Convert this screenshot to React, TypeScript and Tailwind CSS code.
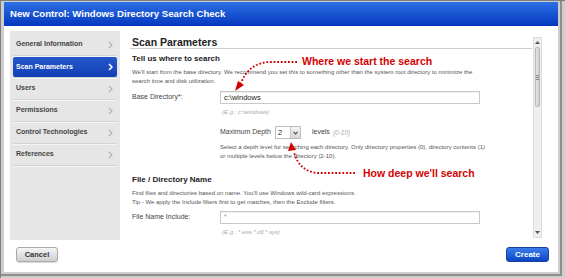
import React from "react";

const F = { fontFamily: '"Liberation Sans", Arial, sans-serif' };

function Chevron({ white }: { white?: boolean }) {
  return (
    <svg width="5" height="8" viewBox="0 0 5 8" className="shrink-0">
      <path d="M1 1 L4 4 L1 7" fill="none" stroke={white ? "#ffffff" : "#b0b0b0"} strokeWidth={white ? 1.5 : 1.1} />
    </svg>
  );
}

const items = [
  "General Information",
  "Scan Parameters",
  "Users",
  "Permissions",
  "Control Technologies",
  "References",
];

function Sidebar() {
  return (
    <div className="w-[110px] h-[209px] bg-[#e6e6e6] pt-[3px] px-[3px] flex flex-col">
      {items.map((t, i) =>
        i === 1 ? (
          <div key={t} className="h-[22px] py-[1px] border-b border-[#d3d3d3] shadow-[0_1px_0_#f5f5f5]">
            <div className="h-[20px] rounded-[2px] bg-linear-to-b from-[#2457cc] to-[#1240b4] flex items-center justify-between pl-[3px] pr-[4px]">
              <span className="text-[7px] font-bold text-white">{t}</span>
              <Chevron white />
            </div>
          </div>
        ) : (
          <div
            key={t}
            className="h-[22px] border-b border-[#d3d3d3] shadow-[0_1px_0_#f5f5f5] flex items-center justify-between pl-[3px] pr-[4px]"
          >
            <span className="text-[7px] font-bold text-[#444]">{t}</span>
            <Chevron />
          </div>
        )
      )}
    </div>
  );
}

function Scrollbar() {
  return (
    <div className="w-[9px] mt-[6px] mb-[2px] bg-[#efefef] border border-[#dcdcdc] flex flex-col">
      <div className="h-[9px] flex items-center justify-center">
        <svg width="5" height="3" viewBox="0 0 5 3">
          <path d="M0 3 L2.5 0 L5 3 Z" fill="#555" />
        </svg>
      </div>
      <div className="h-[60px] mx-[1px] rounded-[2px] bg-linear-to-r from-[#e4e4e4] to-[#cfcfcf] border border-[#b8b8b8] flex items-center justify-center">
        <div className="flex flex-col gap-[1px]">
          <div className="w-[3px] h-px bg-[#888]" />
          <div className="w-[3px] h-px bg-[#888]" />
          <div className="w-[3px] h-px bg-[#888]" />
        </div>
      </div>
      <div className="flex-1" />
      <div className="h-[9px] flex items-center justify-center">
        <svg width="5" height="3" viewBox="0 0 5 3">
          <path d="M0 0 L2.5 3 L5 0 Z" fill="#555" />
        </svg>
      </div>
    </div>
  );
}

function Content() {
  return (
    <div className="flex-1 flex ml-[10px] mr-[10px] h-[209px]">
      <div className="flex-1 overflow-hidden flex flex-col">
        <div className="pt-[5px] border-b border-[#cfcfcf] mr-[1px]">
          <div className="pl-[2px] text-[10.5px] leading-[12px] font-bold text-[#222]">Scan Parameters</div>
        </div>
        <div className="pl-[2px] flex flex-col">
          <div className="mt-[5px] text-[8px] leading-[10px] font-bold text-[#222]">Tell us where to search</div>
          <div className="mt-[4px] text-[6px] leading-[9px] text-[#555] whitespace-nowrap">
            We'll start from the base directory. We recommend you set this to something other than the system root directory to minimize the
            <br />
            search time and disk utilization.
          </div>
          <div className="mt-[5px] flex items-center h-[13px]">
            <div className="w-[88px] text-[7px] text-[#444]">Base Directory*:</div>
            <div className="w-[260px] h-[13px] border border-[#c9c9c9] shadow-[inset_0_1px_1px_#eee] flex items-center pl-[3px] text-[7.5px] text-[#222]">
              c:\windows
            </div>
          </div>
          <div className="mt-[4px] pl-[90px] text-[6px] leading-[9px] italic text-[#aaa]">(E.g.: c:\windows)</div>
          <div className="mt-[9px] pl-[88px] flex items-center h-[13px]">
            <span className="text-[7px] text-[#444]">Maximum Depth</span>
            <div className="ml-[4px] w-[26px] h-[13px] border border-[#bdbdbd] flex items-stretch">
              <div className="flex-1 flex items-center pl-[2px] text-[7.5px] text-[#222]">2</div>
              <div className="w-[10px] bg-linear-to-b from-[#f4f4f4] to-[#d8d8d8] border-l border-[#c6c6c6] flex items-center justify-center">
                <svg width="5" height="4" viewBox="0 0 5 4">
                  <path d="M0.5 0.8 L2.5 3 L4.5 0.8" fill="none" stroke="#444" strokeWidth="1.1" />
                </svg>
              </div>
            </div>
            <span className="ml-[11px] text-[7px] text-[#444]">levels</span>
            <span className="ml-[3px] text-[6.5px] italic text-[#aaa]">(0-10)</span>
          </div>
          <div className="mt-[4px] pl-[88px] text-[6px] leading-[9px] text-[#555] whitespace-nowrap">
            Select a depth level for searching each directory. Only directory properties (0), directory contents (1)
            <br />
            or multiple levels below the directory (2-10).
          </div>
          <div className="mt-[14px] text-[8px] leading-[10px] font-bold text-[#222]">File / Directory Name</div>
          <div className="mt-[4px] text-[6px] leading-[9px] text-[#555]">
            Find files and directories based on name. You'll use Windows wild-card expressions.
            <br />
            Tip - We apply the Include filters first to get matches, then the Exclude filters.
          </div>
          <div className="mt-[4px] flex items-center h-[13px] shrink-0">
            <div className="w-[88px] text-[7px] text-[#444]">File Name Include:</div>
            <div className="w-[260px] h-[13px] border border-[#c9c9c9] shadow-[inset_0_1px_1px_#eee] flex items-center pl-[3px] text-[7px] text-[#999]">
              *
            </div>
          </div>
          <div className="mt-[4px] pl-[90px] text-[6px] leading-[9px] italic text-[#aaa]">(E.g.: *.exe,*.dll,*.sys)</div>
        </div>
      </div>
      <Scrollbar />
    </div>
  );
}

function Annotations() {
  return (
    <>
      <svg className="absolute left-0 top-0 pointer-events-none" width="565" height="278" viewBox="0 0 565 278">
        <path d="M296 61 L268 61 Q248 62 240 82" fill="none" stroke="#d40000" strokeWidth="1.8" strokeDasharray="1.8 1.8" />
        <polygon points="234,90 237,80 243,84" fill="#d40000" />
        <path d="M354 172 L316 172 Q298 170 293 151" fill="none" stroke="#d40000" strokeWidth="1.8" strokeDasharray="1.8 1.8" />
        <polygon points="290,141 287,150 295,149" fill="#d40000" />
      </svg>
      <div className="absolute left-[301px] top-[54px] text-[10.5px] leading-[12px] font-bold text-[#d40000] whitespace-nowrap">
        Where we start the search
      </div>
      <div className="absolute left-[362px] top-[166px] text-[10.5px] leading-[12px] font-bold text-[#d40000] whitespace-nowrap">
        How deep we'll search
      </div>
    </>
  );
}

export default function App() {
  return (
    <div style={F} className="relative w-[565px] h-[278px] bg-[#cdcdcd] border-l border-t border-[#7d7d7d] pr-[3px] pb-[2px] flex">
      <div className="flex-1 flex border-r-2 border-b-2 border-[#8e8e8e] pl-[3px] pt-[1px] pr-[2px] pb-[2px]">
        <div className="flex-1 flex flex-col bg-white">
          <div className="h-[24px] bg-linear-to-b from-[#2e6fe4] to-[#0637bf] flex items-center pl-[6px]">
            <span className="text-[9.6px] font-bold text-white">New Control: Windows Directory Search Check</span>
          </div>
          <div className="flex-1 flex flex-col pt-[5px] px-[6px]">
            <div className="flex">
              <Sidebar />
              <Content />
            </div>
            <div className="flex-1 flex items-start justify-between pt-[7px] pl-[6px] pr-[3px]">
              <button className="w-[42px] h-[15px] rounded-[3px] border border-[#a9a9a9] bg-linear-to-b from-[#f6f6f6] to-[#cfcfcf] text-[7.5px] font-bold text-[#333] shadow-[0_1px_1px_rgba(0,0,0,0.15)]">
                Cancel
              </button>
              <button className="w-[43px] h-[15px] rounded-[3px] border border-[#1c3f9c] bg-linear-to-b from-[#3b7cea] to-[#0a45c4] text-[8px] font-bold text-white">
                Create
              </button>
            </div>
          </div>
        </div>
      </div>
      <Annotations />
    </div>
  );
}
